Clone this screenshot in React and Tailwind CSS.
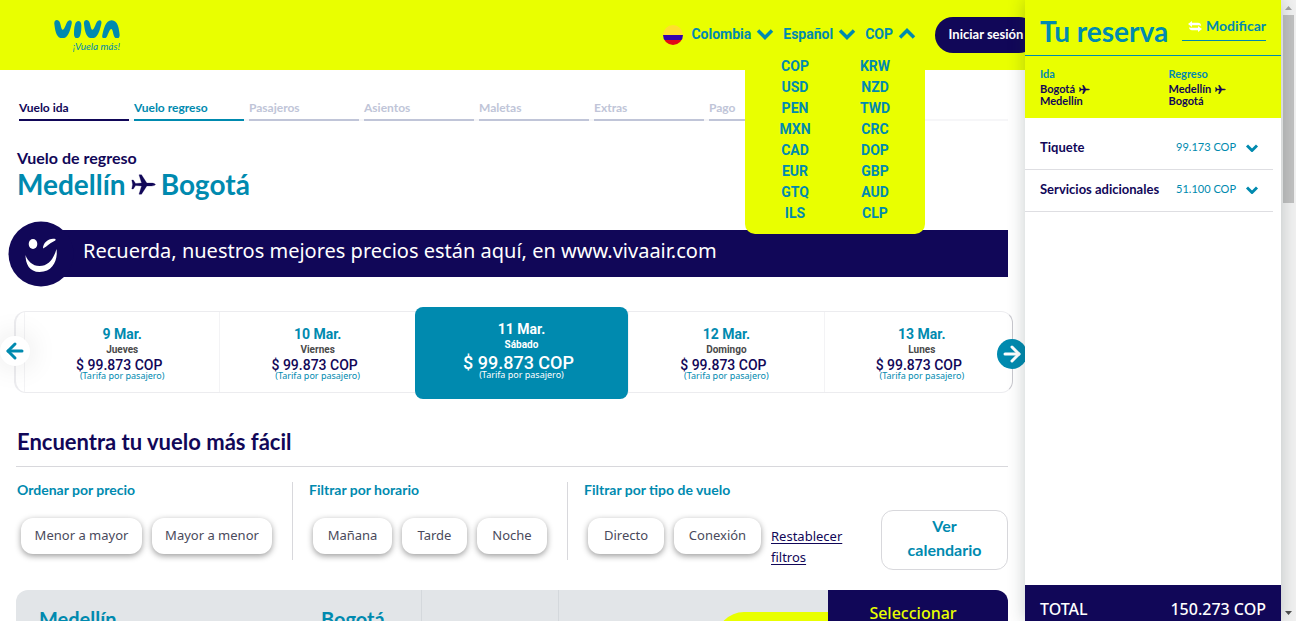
import { ChevronDown, ChevronUp, ArrowLeft, ArrowRight } from "lucide-react";

const steps = [
  { name: "Vuelo ida", tone: "text-[#110758] border-[#110758]" },
  { name: "Vuelo regreso", tone: "text-[#008aaf] border-[#008aaf]" },
  { name: "Pasajeros", tone: "text-[#c0c5d8] border-[#c0c5d8]" },
  { name: "Asientos", tone: "text-[#c0c5d8] border-[#c0c5d8]" },
  { name: "Maletas", tone: "text-[#c0c5d8] border-[#c0c5d8]" },
  { name: "Extras", tone: "text-[#c0c5d8] border-[#c0c5d8]" },
  { name: "Pago", tone: "text-[#c0c5d8] border-[#c0c5d8]" },
];

const currencies = [
  "COP", "KRW", "USD", "NZD", "PEN", "TWD", "MXN", "CRC",
  "CAD", "DOP", "EUR", "GBP", "GTQ", "AUD", "ILS", "CLP",
];

const days = [
  { date: "9 Mar.", day: "Jueves" },
  { date: "10 Mar.", day: "Viernes" },
  { date: "11 Mar.", day: "Sábado", selected: true },
  { date: "12 Mar.", day: "Domingo" },
  { date: "13 Mar.", day: "Lunes" },
];

function Plane({ className }) {
  return (
    <svg viewBox="0 0 25 21" className={className} fill="currentColor" stroke="currentColor" strokeLinejoin="round" aria-hidden="true">
      <path d="M24.500 10.500c-1-1-2.500-1.400-4-1.400h-4.700L10.500.8H8l2.600 8.300L4.600 9.500 2.300 6H.8l.8 4.500L.8 15h1.500l2.300-3.500 6 .4L8 20.200h2.500l5.300-8.300h4.700c1.500 0 3-.4 4-1.400z" />
    </svg>
  );
}

function Logo() {
  return (
    <a href="#inicio" aria-label="Viva" className="mt-1 flex w-[66px] flex-col items-end text-[#008aaf]">
      <svg viewBox="0 0 198 56" className="w-full" fill="currentColor" aria-hidden="true">
        <path d="M1 12C-1-2 14-4 18 8c3 9 4 20 8 21 5 0 8-12 12-20 5-12 18-11 15 2-4 16-9 44-28 44C6 55 3 29 1 12z" />
        <path d="M63 14c3-15 19-15 19 2 0 10 0 20-3 29-4 14-19 13-19-2 0-10 0-20 3-29z" />
        <path d="M90 12C88-2 103-4 107 8c3 9 4 20 8 21 5 0 8-12 12-20 5-12 18-11 15 2-4 16-9 44-28 44-19 0-22-26-24-43z" />
        <path d="M145 45c4-16 9-44 28-44s22 26 24 43c1 14-13 15-17 4-3-9-4-20-8-21-5 0-8 12-12 20-5 12-18 11-15-2z" />
      </svg>
      <span className="text-[10px] leading-4 whitespace-nowrap italic">¡Vuela más!</span>
    </a>
  );
}

function NavButton({ children, open }) {
  const Icon = open ? ChevronUp : ChevronDown;
  return (
    <button type="button" className="-mr-0.5 flex items-center font-['Roboto',sans-serif] text-sm font-bold text-[#008aaf]">
      {children}
      <Icon className="size-7" strokeWidth={3} strokeLinecap="butt" strokeLinejoin="miter" />
    </button>
  );
}

function Header() {
  return (
    <header className="relative flex h-[70px] items-center justify-between bg-[#e9ff00] pl-[54px]">
      <Logo />
      <nav className="-mr-3 flex items-center" aria-label="Preferencias">
        <svg viewBox="0 0 20 20" className="mr-2 size-5" aria-hidden="true">
          <defs>
            <clipPath id="flag"><circle cx="10" cy="10" r="10" /></clipPath>
          </defs>
          <g clipPath="url(#flag)">
            <path fill="#ffe02e" d="M0 0h20v10H0z" />
            <path fill="#3500ad" d="M0 10h20v5H0z" />
            <path fill="#e20a17" d="M0 15h20v5H0z" />
          </g>
        </svg>
        <div className="flex items-center gap-1.5 pb-0.5">
          <NavButton>Colombia</NavButton>
          <NavButton>Español</NavButton>
          <NavButton open>COP</NavButton>
        </div>
        <button type="button" className="ml-4 h-9 w-[102px] rounded-full bg-[#110758] text-[13px] font-bold whitespace-nowrap text-white">
          Iniciar sesión
        </button>
      </nav>
      <ul className="absolute top-14 right-[100px] z-10 grid w-[180px] grid-cols-2 rounded-b-[10px] bg-[#e9ff00] px-2.5 pb-2.5 text-center font-['Roboto',sans-serif] text-sm leading-[21px] font-bold text-[#008aaf]">
        {currencies.map((c) => (
          <li key={c}><button type="button">{c}</button></li>
        ))}
      </ul>
    </header>
  );
}

function DayCard({ date, day, selected }) {
  return (
    <button
      type="button"
      className={
        selected
          ? "z-10 -mt-[5px] -mb-[7px] flex min-w-0 flex-[214] flex-col items-center rounded-lg bg-[#008aaf] pt-3.5 font-['Roboto',sans-serif] font-bold text-white"
          : "flex min-w-0 flex-[195] flex-col items-center border-l border-[#f3f3f5] pt-3.5 font-['Roboto',sans-serif] font-bold text-[#008aaf]"
      }
    >
      <span className="text-sm leading-4">{date}</span>
      <span className={selected ? "text-[10px] leading-4" : "text-[10px] leading-4 text-[#4a4a4a]"}>{day}</span>
      <span className={selected ? "mr-1.5 text-lg leading-5 font-medium" : "mr-1.5 text-sm leading-[14px] font-medium text-[#110758]"}>
        $ 99.873 COP
      </span>
      <span className={selected ? "-mt-0.5 font-['Noto_Sans',sans-serif] text-[9px] leading-2 font-normal" : "font-['Noto_Sans',sans-serif] text-[9px] leading-2 font-normal"}>
        (Tarifa por pasajero)
      </span>
    </button>
  );
}

function Chip({ children, width }) {
  return (
    <button
      type="button"
      className={`${width} h-9 shrink-0 rounded-xl bg-white font-['Noto_Sans',sans-serif] text-[13px] text-[#4a4a5c] shadow-[0_2px_6px_rgba(0,0,0,0.4)]`}
    >
      {children}
    </button>
  );
}

function FilterGroup({ title, className, children }) {
  return (
    <section className={className}>
      <h3 className="text-sm leading-4 font-bold text-[#008aaf]">{title}</h3>
      <div className="mt-5 flex gap-2.5 pl-1">{children}</div>
    </section>
  );
}

function Main() {
  return (
    <main className="px-[17px]">
      <ol className="ml-0.5 mt-[30px] flex gap-[5px] border-b-2 border-[#f6f6f8] text-xs leading-4 font-bold">
        {steps.map((s) => (
          <li key={s.name} className={`-mb-0.5 w-[110px] border-b-2 pb-[3px] ${s.tone}`}>{s.name}</li>
        ))}
      </ol>

      <h2 className="mt-[27px] text-base leading-5 font-bold">Vuelo de regreso</h2>
      <h1 className="flex items-center gap-[5px] text-[28px] leading-8 font-bold text-[#008aaf]">
        Medellín <Plane className="h-[21px] w-[25px] stroke-[0.3] text-[#110758]" /> Bogotá
      </h1>

      <div className="mt-[21px] -ml-[9px] flex h-[66px] items-center">
        <svg viewBox="0 0 66 66" className="z-10 size-[66px] shrink-0" aria-hidden="true">
          <circle cx="33" cy="33" r="32.500" fill="#110758" />
          <ellipse cx="25" cy="23" rx="4.300" ry="5" fill="#fff" />
          <path fill="#fff" d="M35 27.500c0-6 6-11 12.500-9.500.5 1.500-1 2-2 2.500-4 1.500-6 5-10.500 7z" />
          <path fill="#fff" d="M17.500 34c2 6 7 11 14 11 9 0 14-7 17-17 1.500 10-3 23-17 23-10 0-14-8-14-17z" />
        </svg>
        <p className="-ml-8 mb-px flex h-[47px] flex-1 items-center bg-[#110758] pb-1.5 pl-[41px] font-['Noto_Sans',sans-serif] text-xl whitespace-nowrap text-white">
          Recuerda, nuestros mejores precios están aquí, en www.vivaair.com
        </p>
      </div>

      <div className="relative mt-6 -mr-[5px] -ml-[3px] h-[82px] rounded-xl border border-l-2 border-[#ececef] border-r-[#c9c9cf]">
        <div className="-mr-[7px] flex h-full pl-2">
          {days.map((d) => <DayCard key={d.date} {...d} />)}
        </div>
        <button type="button" aria-label="Días anteriores" className="absolute top-6 -left-4 z-20 flex size-[30px] items-center justify-center rounded-full bg-white text-[#008aaf] shadow-[0_0_30px_rgba(0,0,0,0.12)]">
          <ArrowLeft className="size-6" strokeWidth={3} />
        </button>
        <button type="button" aria-label="Días siguientes" className="absolute top-[27px] -right-[15px] z-20 flex size-[30px] items-center justify-center rounded-full bg-[#008aaf] text-white">
          <ArrowRight className="size-6" strokeWidth={3} />
        </button>
      </div>

      <h2 className="-ml-px mt-[33px] border-b border-[#d8d8dc] pb-2 pl-px text-[22px] leading-8 font-bold">Encuentra tu vuelo más fácil</h2>

      <div className="mt-[15px] flex h-[88px] items-start">
        <FilterGroup title="Ordenar por precio" className="h-[78px] w-[276px] shrink-0 border-r border-[#d8d8dc]">
          <Chip width="w-[121px]">Menor a mayor</Chip>
          <Chip width="w-[120px]">Mayor a menor</Chip>
        </FilterGroup>
        <FilterGroup title="Filtrar por horario" className="h-[78px] w-[275px] shrink-0 border-r border-[#d8d8dc] pl-4">
          <Chip width="w-[79px]">Mañana</Chip>
          <Chip width="w-[65px]">Tarde</Chip>
          <Chip width="w-[70px]">Noche</Chip>
        </FilterGroup>
        <FilterGroup title="Filtrar por tipo de vuelo" className="pl-4">
          <Chip width="w-[76px]">Directo</Chip>
          <Chip width="w-[87px]">Conexión</Chip>
          <a href="#filtros" className="mt-2 w-20 text-[13px] leading-[21px] underline underline-offset-2 font-['Noto_Sans',sans-serif]">
            Restablecer filtros
          </a>
        </FilterGroup>
        <button type="button" className="mt-7 ml-auto h-[60px] w-[127px] rounded-xl border border-[#d8d8dc] bg-white px-4 pb-1 text-base leading-6 font-bold text-[#008aaf]">
          Ver calendario
        </button>
      </div>

      <article className="-ml-px mt-5 flex h-32 overflow-hidden rounded-xl bg-[#e2e5e8] text-xl font-bold text-[#008aaf]">
        <div className="flex w-[406px] border-r border-[#d4d8dc] pt-[15px] pl-[23px]">
          <span className="w-[282px]">Medellín</span>
          <span>Bogotá</span>
        </div>
        <div className="w-[137px] border-r border-[#d4d8dc]" />
        <div className="flex flex-1 justify-end pt-[22px]">
          <div className="w-[112px] rounded-tl-[28px] bg-[#e9ff00]" />
        </div>
        <button type="button" className="flex w-[180px] justify-center bg-[#110758] pt-[11px] pr-2.5 text-base leading-6 font-medium text-[#e9ff00] font-['Noto_Sans',sans-serif]">
          Seleccionar
        </button>
      </article>
    </main>
  );
}

function Route({ title, from, to }) {
  return (
    <div className="text-[11px] leading-3 font-bold">
      <h3 className="mb-[3px] leading-3 text-[#008aaf]">{title}</h3>
      <p className="flex items-center gap-1">{from} <Plane className="h-[9px] w-[11px] stroke-1" /></p>
      <p>{to}</p>
    </div>
  );
}

function PriceRow({ label, price }) {
  return (
    <button type="button" className="mr-2 flex h-[42px] items-center justify-between border-b border-[#dedee2] pr-[11px] pb-0.5 pl-[15px]">
      <span className="text-[13px] font-bold">{label}</span>
      <span className="flex items-center gap-1.5 text-[11px] text-[#008aaf]">
        {price}
        <ChevronDown className="size-5" strokeWidth={3.5} strokeLinecap="butt" />
      </span>
    </button>
  );
}

function Summary() {
  return (
    <aside className="relative z-20 flex w-64 shrink-0 flex-col bg-white shadow-[0_0_16px_rgba(30,50,50,0.25)]">
      <div className="flex h-14 items-center justify-between border-b border-[#008aaf] bg-[#e9ff00] px-[15px] pt-1.5 text-[#008aaf]">
        <h2 className="text-[28px] leading-8 font-bold whitespace-nowrap">Tu reserva</h2>
        <a href="#modificar" className="mb-1 flex items-center gap-1 border-b border-[#008aaf] pb-1 pl-1.5 text-sm leading-5 font-bold">
          <svg viewBox="0 0 14 11" className="h-[11px] w-3.5 text-white" fill="currentColor" aria-hidden="true">
            <path d="M4 0v1.800h6c2 0 3 1.200 3 3.200C12.500 4.300 11.500 4.200 10.500 4.200H4V6L0 3z" />
            <path d="M10 11V9.200H4C2 9.200 1 8 1 6c.5.700 1.500.8 2.500.8H10V5l4 3z" />
          </svg>
          Modificar
        </a>
      </div>
      <div className="grid h-[62px] grid-cols-2 gap-x-4 bg-[#e9ff00] pt-3 pl-[15px]">
        <Route title="Ida" from="Bogotá" to="Medellín" />
        <Route title="Regreso" from="Medellín" to="Bogotá" />
      </div>
      <div className="flex flex-col pt-[10px]">
        <PriceRow label="Tiquete" price="99.173 COP" />
        <PriceRow label="Servicios adicionales" price="51.100 COP" />
      </div>
      <div className="mt-auto flex h-9 items-end justify-between bg-[#110758] px-[15px] font-['Noto_Sans',sans-serif] text-base leading-6 font-medium text-white">
        <span>TOTAL</span>
        <span>150.273 COP</span>
      </div>
    </aside>
  );
}

function ScrollRail() {
  return (
    <div className="flex w-[15px] shrink-0 flex-col items-center bg-[#f1f1f1]" aria-hidden="true">
      <svg viewBox="0 0 15 15" className="size-[15px]"><path d="M4 10h7L7.500 6z" fill="#a3a3a3" /></svg>
      <div className="h-[188px] w-[11px] bg-[#c1c1c1]" />
      <svg viewBox="0 0 15 15" className="mt-auto size-[15px]"><path d="M4 5h7L7.500 9z" fill="#505050" /></svg>
    </div>
  );
}

export default function App() {
  return (
    <div className="flex h-screen overflow-hidden bg-white font-['Lato',sans-serif] text-[#110758]">
      <div className="min-w-0 flex-1 overflow-hidden">
        <Header />
        <Main />
      </div>
      <Summary />
      <ScrollRail />
    </div>
  );
}
